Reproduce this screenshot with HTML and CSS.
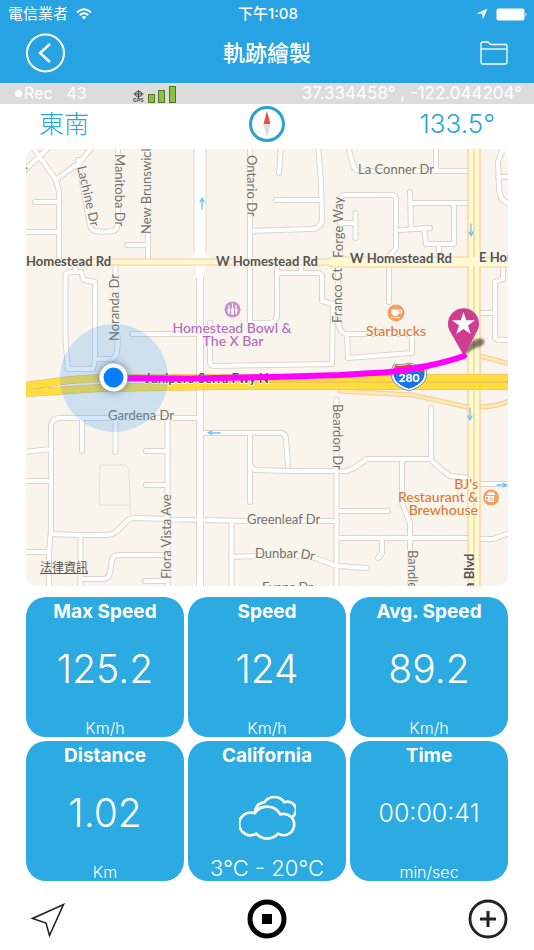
FILE: index.html
```html
<!DOCTYPE html>
<html lang="zh-Hant">
<head>
<meta charset="utf-8">
<meta name="viewport" content="width=device-width, initial-scale=1">
<title>軌跡繪製</title>
<link rel="stylesheet" href="styles.css">
</head>
<body>
<header class="header">
  <div class="status">
    <div class="status-left">
      <span>電信業者</span>
      <svg width="16" height="12" viewBox="0 0 16 12" aria-hidden="true"><g fill="none" stroke="#fff" stroke-width="2"><path d="M1 4.4Q8-1.8 15 4.4"/><path d="M3.7 7.2Q8 3.4 12.300 7.200"/></g><path d="M5.600 9Q8 7 10.400 9L8 11.500Z" fill="#fff"/></svg>
    </div>
    <time class="clock">下午1:08</time>
    <div class="status-right">
      <svg width="12" height="12" viewBox="0 0 12 12" aria-hidden="true"><path d="M11.500.5L6.800 11.500L6.200 5.800L.5 5.500Z" fill="#fff"/></svg>
      <svg width="32" height="13" viewBox="0 0 32 13" aria-hidden="true"><rect x="0.500" y="0.500" width="28" height="12" rx="2" fill="#fff"/><path d="M29.500 4.500Q31.500 6.500 29.500 8.500Z" fill="#fff"/></svg>
    </div>
  </div>
  <div class="nav">
    <button class="icon-button" type="button" aria-label="返回">
      <svg width="40" height="40" viewBox="0 0 40 40"><g fill="none" stroke="#fff"><circle cx="19.500" cy="20" r="18.500" stroke-width="2"/><path d="M24 11L14 20L24 29" stroke-width="2.400"/></g></svg>
    </button>
    <h1 class="title">軌跡繪製</h1>
    <button class="icon-button" type="button" aria-label="檔案夾">
      <svg width="28" height="24" viewBox="0 0 28 24"><g fill="none" stroke="#fff" stroke-width="1.300"><path d="M1 21V2.500Q1 1 2.500 1H8L10.500 3.500H25.500Q27 3.500 27 5V21Q27 23 25 23H3Q1 23 1 21Z"/><path d="M1 8H27"/></g></svg>
    </button>
  </div>
</header>

<div class="record">
  <div class="record-side"><span class="dot"></span><span>Rec</span><span class="count">43</span></div>
  <svg class="signal" width="44" height="18" viewBox="0 0 44 18" aria-hidden="true">
    <g fill="none" stroke="#444" stroke-width="1"><ellipse cx="5.500" cy="9" rx="3.500" ry="2.500"/><path d="M5.500 5V13M0.500 9H10.500"/></g>
    <text class="gps" x="0" y="17">GPS</text>
    <g fill="#86c440" stroke="#55702f"><rect x="15.500" y="9.500" width="6" height="8"/><rect x="25.500" y="5.500" width="6" height="12"/><rect x="36.500" y="1.500" width="6" height="16"/></g>
  </svg>
  <div class="coords">37.334458° , -122.044204°</div>
</div>

<main class="main">
  <div class="heading">
    <span class="direction">東南</span>
    <svg width="36" height="36" viewBox="0 0 36 36" role="img" aria-label="指南針"><circle cx="18" cy="18" r="16.500" fill="#fff" stroke="#26a3d2" stroke-width="3"/><path d="M18 5L21.500 18H14.500Z" fill="#e9503f"/><path d="M18 31L21.500 18H14.500Z" fill="#dcdcdc"/></svg>
    <span class="degrees">133.5°</span>
  </div>

  <div class="map">
    <svg class="map-canvas" viewBox="26 149 482 437" role="img" aria-label="地圖">
      <defs>
        <path id="streets" d="M32 146L56 180L59 192V262M57 179L80 162L92 147M24 171L48 148M35 202H59M24 232H59M78 160L90 225Q91 230 95 231L103 232L113 231Q117 230 118 223V146M148 146V262M127 245H148
        M65.500 295V277Q65 273 69 272H81L84 280L95 282V359M75 272V264M65.500 290V340L68 369H93L95 359H112Q116 358 117 352L118 340L115.500 320V266M132 334H200
        M51 440V426Q52 418 60 418H200M82 418V451M115.500 418V452M167.500 418V590M51 436V530L49 552V590M24 452L51 449M24 481H51M24 552H49M52 534L80 535H106Q113 535 118 530L128 520Q131 518 135 518L203 520L250 521H337
        M80.500 535V590M81 579H102Q109 579 110 573L112 560Q113 555 119 555H167M145 581H167M146 451H168M146 485H168M231.500 521V590M231 557L255 556H300L315 558L337 566L367 568
        M250 435V502M250 465L255 470L290 471H347L354 468L367 459H430L442 470L450 476L470 478M203 433H281Q286 434 286 439L288 466M336.500 400V590M337 511H388M337 538H474M382 538V553L378 558M402 459V503L410 523V590M431 408V459M480 484H510M480 539H493L510 533
        M250 146V323M250 323H271Q277 321 277 314V265M210 323V362Q210 366 215 366L332 364L333 304L322 301V278Q322 273 317 273H277M301 264V273
        M281 146L279 173M318 146L321 182L322 218Q322 228 312 229L250 231M276 200H321M348 146L353 165Q354 170 360 171H470M436 146V171
        M340 262V200Q340 195 346 195H392Q396 195 396 199V248L389 257V302M343 223H355M355.500 213V238M338 262V323Q340 334 348 334H412V353L348 358L347 334
        M410 192L411 228M411 203H470M454 204V244H426L424 228M400 230L430 228M439 244V260M504 146L498 162L499 188Q500 202 510 204M498 177H510M503 264V279L495 282V338L498 340H510M480 313H495"/>
        <path id="freeway" d="M24 386L70 380L100 378H510M24 393L100 388L220 386H510"/>
        <path id="boulevard" d="M471 146V590M477 146V590"/>
      </defs>
      <rect x="26" y="149" width="482" height="437" fill="#f9f5ed"/>
      <path d="M100 465H126L129 468L130 505H99ZM130 505V518" fill="none" stroke="#dfe2d8"/>
      <g fill="none" stroke-linejoin="round" stroke-linecap="round">
        <path d="M200 146V248M200 272V590" stroke="#dcd5ca" stroke-width="8"/>
        <path d="M200 146V250" stroke="#dcd5ca" stroke-width="13"/>
        <use href="#streets" stroke="#dcd5ca" stroke-width="6"/>
        <use href="#streets" stroke="#fff" stroke-width="4"/>
        <path d="M200 146V250" stroke="#fff" stroke-width="11"/>
        <path d="M200 250V590" stroke="#fff" stroke-width="6"/>
        <path d="M195 250Q194 257 188 260H212Q206 257 205 250ZM196 278V264H206L203 278Z" fill="#fff"/>
        <path d="M478 480L484 484L478 488Z" fill="#fff"/>
        <path d="M24 262H510" stroke="#f4cd98" stroke-width="7"/>
        <path d="M333 262H510" stroke="#f4cd98" stroke-width="11"/>
        <path d="M340 391L413 395L467 407M480 407Q494 407 510 401M480 356L510 364" stroke="#f4cd98" stroke-width="5"/>
        <path d="M340 391L413 395L467 407M480 407Q494 407 510 401M480 356L510 364" stroke="#fee9b5" stroke-width="3"/>
        <use href="#boulevard" stroke="#f3c384" stroke-width="7"/>
        <use href="#boulevard" stroke="#fffad2" stroke-width="5"/>
        <path d="M24 262H510" stroke="#fff8d2" stroke-width="5"/>
        <path d="M333 262H510" stroke="#fffad2" stroke-width="9"/>
        <use href="#freeway" stroke="#e6b17c" stroke-width="8"/>
        <use href="#freeway" stroke="#ffdd3c" stroke-width="7"/>
        <path d="M202 209V199M200 202L202 198L204 202M220 433H209M212 431L208 432.500L212 434.500M471 224V234M469 232L471 236L473 232M470 408V418M468 416L470 420L472 416M497 485H506M503 483L507 485L503 487" stroke="#69c5f3" stroke-width="1.300"/>
      </g>
      <g class="street-labels">
        <text x="358" y="174">La Conner Dr</text>
        <text x="108" y="420">Gardena Dr</text>
        <text x="247" y="524">Greenleaf Dr</text>
        <text x="255" y="558">Dunbar</text>
        <text transform="translate(300 558) rotate(10)">Dr</text>
        <text x="262" y="592">Evans Dr</text>
        <text transform="translate(77 167) rotate(77)">Lachine Dr</text>
        <text transform="translate(115 154) rotate(90)">Manitoba Dr</text>
        <text transform="translate(151 234) rotate(-90)">New Brunswick</text>
        <text transform="translate(247 155) rotate(90)">Ontario Dr</text>
        <text transform="translate(343 258) rotate(-90)">Forge Way</text>
        <text transform="translate(342 323) rotate(-90)">Franco Ct</text>
        <text transform="translate(119 341) rotate(-90)">Noranda Dr</text>
        <text transform="translate(171 579) rotate(-90)">Flora Vista Ave</text>
        <text transform="translate(333 404) rotate(90)">Beardon Dr</text>
        <text transform="translate(408 550) rotate(90)">Bandley Dr</text>
        <text transform="translate(26 170) rotate(-40)">r</text>
      </g>
      <g class="road-labels">
        <text x="26" y="266">Homestead Rd</text>
        <text x="216" y="266">W Homestead Rd</text>
        <text x="350" y="263">W Homestead Rd</text>
        <text x="479" y="262">E Homestead Rd</text>
        <text x="145" y="383">Junipero Serra Fwy N</text>
        <text transform="translate(474 589) rotate(-90)">a Blvd</text>
      </g>
      <g class="place-labels bowl">
        <circle cx="232.500" cy="309.500" r="8" fill="#c98fd0"/>
        <path d="M228.500 305V308L227.500 310L228 314H229.500L230 310L229.500 308V305ZM232 303.500V307L231 310L231.500 315H233.500L234 310L233 307V303.500ZM235.500 305V308L235 310L235.500 314H237L237.500 310L236.500 308V305Z" fill="#fff"/>
        <text x="232" y="333">Homestead Bowl &amp;</text>
        <text x="233" y="346">The X Bar</text>
      </g>
      <g class="place-labels food">
        <circle cx="396" cy="313" r="8.500" fill="#f3a062"/>
        <path d="M391.500 309.500H399V313Q398 316 395.500 316Q392 316 391.500 313ZM391 317H400V318H391Z" fill="#fff"/>
        <path d="M399 310.500H401.500V313H399" fill="none" stroke="#fff"/>
        <text x="396" y="336">Starbucks</text>
        <g class="align-end">
          <text x="478" y="489">BJ's</text>
          <text x="478" y="502">Restaurant &amp;</text>
          <text x="478" y="515">Brewhouse</text>
        </g>
        <circle cx="491" cy="497.500" r="8" fill="#f3a062"/>
        <path d="M488 496H494V502H488ZM487 495Q487 492 491 492Q495 492 495 495Z" fill="#fff"/>
        <path d="M488 496.500H485.500V500H488M490 497V501M492 497V501" fill="none" stroke="#fff"/>
        <path d="M490 497V501M492 497V501" stroke="#f3a062" stroke-width="0.800"/>
      </g>
      <g>
        <path d="M395 365Q402 367 409 364Q416 367 423 365Q432 382 409 390Q386 382 395 365Z" fill="#1976e8" stroke="#fff" stroke-width="2"/>
        <path d="M395 365Q402 367 409 364Q416 367 423 365L425 372H393Z" fill="#e84545"/>
        <path d="M394 364Q402 366 409 363Q416 366 424 364Q434 383 409 391Q384 383 394 364Z" fill="none" stroke="#5d7a9c" stroke-width="0.800"/>
        <text class="shield" x="409" y="382">280</text>
      </g>
      <circle cx="114" cy="378" r="54" fill="#3f9df0" fill-opacity="0.230"/>
      <path d="M113 378L190 378.500L273 377L340 375L373 373Q394 373 427 366Q450 361 464 356" fill="none" stroke="#f0f" stroke-width="6" stroke-linecap="round" stroke-linejoin="round"/>
      <circle class="location" cx="113.500" cy="377.500" r="14" fill="#fff"/>
      <circle cx="113.500" cy="377.500" r="10" fill="#087dff"/>
      <path class="pin-shadow" d="M464 355L471 342Q480 336 484 340Q486 346 475 348Z"/>
      <path d="M464 356L451 333A15.500 15.500 0 1 1 476 333Z" fill="#cf3d90"/>
      <path d="M463.500 312L466.300 320.300H475L468 325.500L470.700 334L463.500 328.900L456.300 334L459 325.500L452 320.300H460.700Z" fill="#fff"/>
    </svg>
    <a class="legal" href="#legal">法律資訊</a>
  </div>

  <section class="tiles">
    <article class="tile"><h2>Max Speed</h2><p class="value">125.2</p><p class="unit">Km/h</p></article>
    <article class="tile"><h2>Speed</h2><p class="value">124</p><p class="unit">Km/h</p></article>
    <article class="tile"><h2>Avg. Speed</h2><p class="value">89.2</p><p class="unit">Km/h</p></article>
    <article class="tile"><h2>Distance</h2><p class="value">1.02</p><p class="unit">Km</p></article>
    <article class="tile"><h2>California</h2>
      <svg class="cloud" width="57" height="46" viewBox="716 612 171 138" role="img" aria-label="多雲"><g fill="none" stroke="#fff" stroke-width="8" stroke-linejoin="round"><path d="M763 667A45 45 0 0 1 840 670A32 32 0 1 1 833 728A43 43 0 0 1 768 728A34 34 0 1 1 763 667Z"/><path d="M764 664A29 29 0 0 1 792 634A36 36 0 0 1 852 634A25 25 0 0 1 872 680"/><path d="M766 658Q777 646 799 647" stroke-width="6"/></g></svg>
      <p class="range">3°C - 20°C</p></article>
    <article class="tile"><h2>Time</h2><p class="value elapsed">00:00:41</p><p class="unit">min/sec</p></article>
  </section>
</main>

<footer class="toolbar">
  <button class="icon-button" type="button" aria-label="定位"><svg width="40" height="40" viewBox="0 0 40 40"><path d="M37.500 5.500L23.500 36.500L20 24L6.500 19.500Z" fill="none" stroke="#222" stroke-width="1.600"/></svg></button>
  <button class="icon-button" type="button" aria-label="停止"><svg width="40" height="40" viewBox="0 0 40 40"><circle cx="20" cy="20" r="17" fill="none" stroke="#000" stroke-width="5"/><path d="M15 15H25V25H15Z"/></svg></button>
  <button class="icon-button" type="button" aria-label="新增"><svg width="40" height="40" viewBox="0 0 40 40"><g fill="none" stroke="#222"><circle cx="20" cy="20" r="18" stroke-width="2.800"/><path d="M20 12V28M12 20H28" stroke-width="3"/></g></svg></button>
</footer>
</body>
</html>
```
FILE: styles.css
```css
* {
  box-sizing: border-box;
}

body {
  margin: 0;
  background: #fff;
  color: #fff;
  font-family: Inter, "Noto Sans CJK TC", sans-serif;
}

h1,
h2,
p {
  margin: 0;
}

svg {
  display: block;
  flex: none;
}

.icon-button {
  display: flex;
  padding: 0;
  border: 0;
  background: none;
}

.header {
  background: #27a3e4;
}

.status,
.nav,
.record,
.heading {
  display: grid;
  grid-template-columns: 1fr auto 1fr;
  align-items: center;
}

.status {
  height: 28px;
  padding: 0 6px 0 8px;
  font-size: 15px;
  line-height: 28px;
}

.status-left,
.status-right {
  display: flex;
  align-items: center;
  gap: 8px;
}

.status-right {
  justify-content: flex-end;
}

.clock {
  font-weight: 500;
}

.nav {
  height: 55px;
  padding: 0 26px 5px;
}

.nav .icon-button:last-child {
  justify-self: end;
}

.title {
  font-size: 22px;
  line-height: 32px;
  font-weight: 500;
}

.record {
  grid-template-columns: 118px auto 1fr;
  height: 21px;
  padding: 0 12px 0 15px;
  background: #dcdcdc;
  font-size: 16px;
  line-height: 21px;
}

.record-side {
  display: flex;
  align-items: center;
  gap: 2px;
}

.dot {
  width: 7px;
  height: 7px;
  border-radius: 50%;
  background: #fff;
}

.count {
  margin-left: 12px;
}

.coords {
  font-size: 17px;
  text-align: right;
  white-space: nowrap;
}

.gps {
  font: 700 5px "Liberation Sans", sans-serif;
  fill: #444;
}

.main {
  padding: 0 26px;
}

.heading {
  height: 45px;
  padding: 0 13px 5px;
  color: #29a6e0;
  font-size: 26px;
  line-height: 40px;
}

.direction {
  font-size: 25px;
  font-weight: 300;
}

.degrees {
  text-align: right;
  font-weight: 300;
}

.map {
  position: relative;
  overflow: hidden;
  border-radius: 10px;
}

.map-canvas {
  width: 100%;
  height: auto;
  font-family: Lato, sans-serif;
}

.map-canvas text {
  paint-order: stroke;
  stroke: #f9f5ed;
  stroke-width: 2px;
}

.street-labels {
  font-size: 13px;
  fill: #73716e;
}

.road-labels {
  font-size: 13px;
  font-weight: 700;
  fill: #55534f;
}

.place-labels {
  font-size: 14px;
  font-weight: 500;
  text-anchor: middle;
}

.align-end {
  text-anchor: end;
}

.bowl {
  fill: #b56cbf;
}

.food {
  fill: #dc7b35;
}

.map-canvas .shield {
  font-size: 12px;
  font-weight: 900;
  fill: #fff;
  stroke: none;
  text-anchor: middle;
}

.location {
  filter: drop-shadow(0 0 4px #5f7890);
}

.pin-shadow {
  fill: #000;
  opacity: 0.500;
  filter: blur(1px);
}

.legal {
  position: absolute;
  left: 14px;
  bottom: 9px;
  color: #555;
  font-size: 12px;
  line-height: 18px;
}

.tiles {
  display: grid;
  grid-template-columns: repeat(3, 1fr);
  gap: 4px;
  margin-top: 11px;
}

.tile {
  display: flex;
  flex-direction: column;
  align-items: center;
  justify-content: space-between;
  height: 140px;
  border-radius: 20px;
  background: #2caae2;
  white-space: nowrap;
}

.tile h2 {
  font-size: 19px;
  line-height: 30px;
  font-weight: 700;
}

.value {
  margin-bottom: 8px;
  font-size: 39px;
  line-height: 56px;
  font-weight: 300;
}

.elapsed {
  font-size: 25px;
}

.unit {
  font-size: 16px;
  line-height: 18px;
  font-weight: 300;
}

.cloud {
  margin-top: 10px;
}

.range {
  font-size: 22px;
  line-height: 26px;
  font-weight: 300;
}

.toolbar {
  display: flex;
  align-items: center;
  justify-content: space-between;
  height: 69px;
  padding: 6px 26px 0;
}
```
